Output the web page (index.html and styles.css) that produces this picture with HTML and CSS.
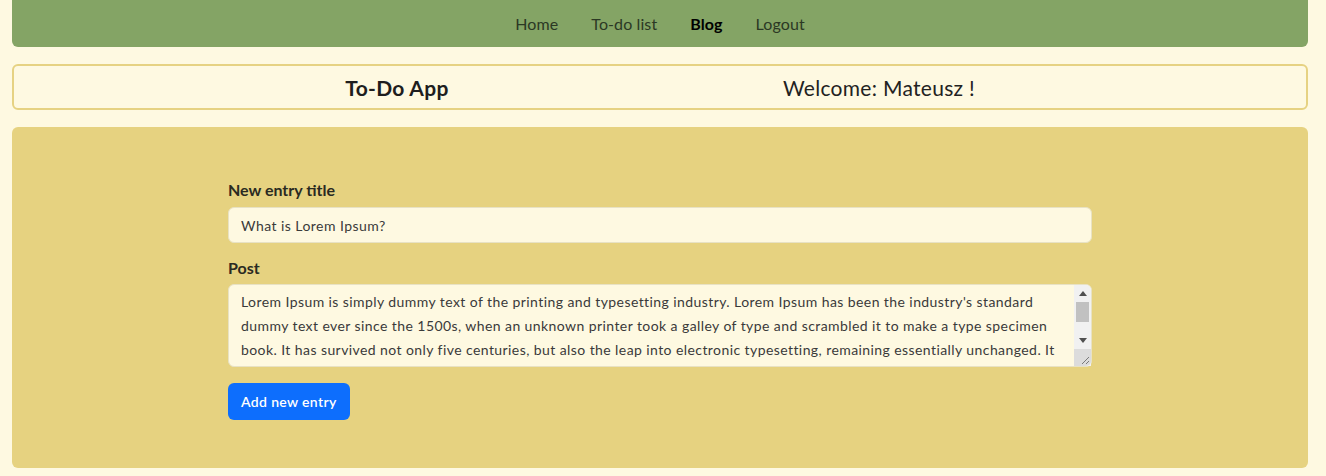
FILE: index.html
```html
<!DOCTYPE html>
<html>
<head>
<meta charset="utf-8">
<link rel="stylesheet" href="styles.css">
</head>
<body>
<nav class="nav">
  <a class="nav-link" href="#">Home</a>
  <a class="nav-link" href="#">To-do list</a>
  <a class="nav-link active" href="#">Blog</a>
  <a class="nav-link" href="#">Logout</a>
</nav>
<header class="header">
  <div class="app-title">To-Do App</div>
  <div class="welcome">Welcome: Mateusz !</div>
</header>
<main class="panel">
  <form class="form">
    <label class="label" for="title">New entry title</label>
    <input class="input" id="title" type="text" value="What is Lorem Ipsum?">
    <label class="label" for="post">Post</label>
    <div class="textarea-wrap">
      <textarea class="textarea" id="post">Lorem Ipsum is simply dummy text of the printing and typesetting industry. Lorem Ipsum has been the industry's standard dummy text ever since the 1500s, when an unknown printer took a galley of type and scrambled it to make a type specimen book. It has survived not only five centuries, but also the leap into electronic typesetting, remaining essentially unchanged. It was popularised in the 1960s with the release of Letraset sheets containing Lorem Ipsum passages, and more recently with desktop publishing software like Aldus PageMaker including versions of Lorem Ipsum.</textarea>
      <div class="scrollbar" aria-hidden="true">
        <div class="sb-btn">
          <svg width="8" height="5" viewBox="0 0 8 5"><polygon points="0,5 8,5 4,0" fill="#505050"/></svg>
        </div>
        <div class="sb-track"><div class="sb-thumb"></div></div>
        <div class="sb-btn">
          <svg width="8" height="5" viewBox="0 0 8 5"><polygon points="0,0 8,0 4,5" fill="#505050"/></svg>
        </div>
        <div class="sb-resizer">
          <svg width="17" height="17" viewBox="0 0 17 17"><path d="M15 8 L8 15 M15 12 L12 15" stroke="#7a7a7a" stroke-width="1"/></svg>
        </div>
      </div>
    </div>
    <div class="actions"><button class="btn" type="button">Add new entry</button></div>
  </form>
</main>
</body>
</html>
```

FILE: styles.css
```css
html, body {
  margin: 0;
  padding: 0;
}
body {
  background: #fef9e1;
  font-family: "Lato", "Noto Sans", sans-serif;
  color: #212529;
  padding: 0 18px 9px 12px;
  box-sizing: border-box;
}
.nav {
  height: 47px;
  background: #84a465;
  border-radius: 0 0 6px 6px;
  display: flex;
  justify-content: center;
  align-items: center;
  gap: 33px;
}
.nav-link {
  font-size: 16px;
  color: #2b3824;
  text-decoration: none;
  letter-spacing: 0.1px;
}
.nav-link.active {
  color: #000;
  font-weight: 700;
}
.header {
  margin-top: 17px;
  height: 46px;
  box-sizing: border-box;
  border: 2px solid #e6d282;
  border-radius: 6px;
  display: grid;
  grid-template-columns: 482px 482px;
  align-items: center;
  padding-left: 142px;
}
.app-title {
  text-align: center;
  font-size: 21px;
  font-weight: 700;
  letter-spacing: 0.3px;
  color: #1e1e1e;
}
.welcome {
  text-align: center;
  font-size: 21px;
  font-weight: 400;
  letter-spacing: 0.3px;
  color: #222;
}
.panel {
  margin-top: 17px;
  background: #e6d280;
  border-radius: 6px;
  padding: 51px 0 48px;
}
.form {
  width: 864px;
  margin-left: 216px;
  display: flex;
  flex-direction: column;
}
.label {
  display: block;
  font-size: 16px;
  line-height: 24px;
  font-weight: 700;
  color: #2a2a22;
  margin-bottom: 5px;
}
.input {
  height: 36px;
  box-sizing: border-box;
  background: #fef9e1;
  border: 1px solid #e8e2c4;
  border-radius: 6px;
  padding: 0 12px;
  font-family: inherit;
  font-size: 14px;
  letter-spacing: 0.45px;
  color: #3a3a3a;
  margin-bottom: 13px;
  outline: none;
}
.input + .label {
  margin-bottom: 4px;
}
.textarea-wrap {
  position: relative;
  height: 83px;
}
.textarea {
  display: block;
  width: 100%;
  height: 83px;
  box-sizing: border-box;
  background: #fef9e1;
  border: 1px solid #e8e2c4;
  border-radius: 6px;
  padding: 5px 29px 5px 12px;
  font-family: inherit;
  font-size: 14px;
  letter-spacing: 0.42px;
  line-height: 24px;
  color: #3a3a3a;
  resize: none;
  outline: none;
  overflow: hidden;
}
.scrollbar {
  position: absolute;
  top: 1px;
  right: 1px;
  bottom: 1px;
  width: 17px;
  display: flex;
  flex-direction: column;
  background: #f1f1f1;
  border-top-right-radius: 5px;
  pointer-events: none;
}
.sb-btn {
  height: 17px;
  flex: none;
  display: flex;
  align-items: center;
  justify-content: center;
}
.sb-track {
  flex: 1;
  display: flex;
  flex-direction: column;
  padding: 0 2px;
}
.sb-thumb {
  height: 20px;
  background: #c1c1c1;
}
.sb-resizer {
  height: 17px;
  flex: none;
  background: #dcdcdc;
  border-bottom-right-radius: 5px;
}
.sb-resizer svg {
  display: block;
}
.actions {
  margin-top: 16px;
}
.btn {
  height: 37px;
  padding: 0 13px;
  background: #0d6efd;
  color: #fff;
  border: none;
  border-radius: 6px;
  font-family: inherit;
  font-size: 14px;
  letter-spacing: 0.35px;
  font-weight: 600;
}
```
